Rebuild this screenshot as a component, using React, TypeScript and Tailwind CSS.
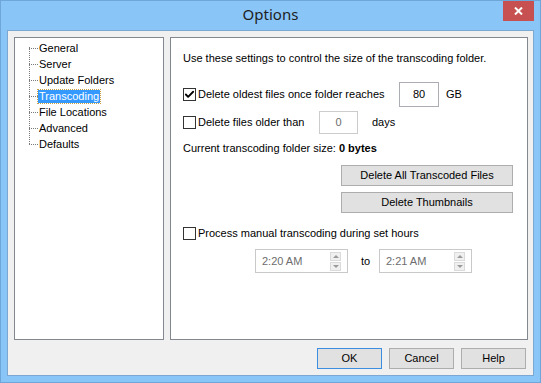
import { Check } from 'lucide-react'

const font = { fontFamily: '"Liberation Sans", Arial, sans-serif' }

const treeItems = ['General', 'Server', 'Update Folders', 'Transcoding', 'File Locations', 'Advanced', 'Defaults']

function CheckBox({ checked }: { checked?: boolean }) {
  return (
    <div className="w-[13px] h-[13px] border border-[#333333] bg-white flex items-center justify-center shrink-0">
      {checked && <Check className="w-[11px] h-[11px] text-black" strokeWidth={4} />}
    </div>
  )
}

function Spinner({ value }: { value: string }) {
  return (
    <div className="w-[93px] h-[24px] border border-[#c9c9c9] bg-white flex items-center justify-between pl-[6px] pr-[6px]">
      <span className="text-[#6d6d6d]">{value}</span>
      <div className="flex flex-col gap-[1px]">
        <div className="w-[11px] h-[9px] bg-[#f0f0f0] border border-[#dadada] flex items-center justify-center">
          <div className="w-0 h-0 border-l-[3px] border-r-[3px] border-b-[3px] border-l-transparent border-r-transparent border-b-[#9a9a9a]" />
        </div>
        <div className="w-[11px] h-[9px] bg-[#f0f0f0] border border-[#dadada] flex items-center justify-center">
          <div className="w-0 h-0 border-l-[3px] border-r-[3px] border-t-[3px] border-l-transparent border-r-transparent border-t-[#9a9a9a]" />
        </div>
      </div>
    </div>
  )
}

function Button({ label, width, focused }: { label: string; width: string; focused?: boolean }) {
  return (
    <div
      className={`${width} h-[21px] flex items-center justify-center bg-[#e1e1e1] border ${
        focused ? 'border-[#3c8ee0]' : 'border-[#adadad]'
      } text-black`}
    >
      {label}
    </div>
  )
}

export default function App() {
  return (
    <div
      className="w-[541px] h-[383px] bg-[#8ac5f8] border border-[#6fa6da] flex flex-col text-[11px] text-black whitespace-nowrap"
      style={font}
    >
      {/* title bar */}
      <div className="h-[29px] relative flex items-center justify-center">
        <span className="text-[15px] text-[#1e1e1e] -mt-[2px]" style={{ fontFamily: '"Noto Sans", sans-serif' }}>
          Options
        </span>
        <div className="absolute top-0 right-[6px] w-[31px] h-[20px] bg-[#c75050] flex items-center justify-center">
          <svg width="9" height="8" viewBox="0 0 9 8">
            <path d="M1 0.5 L8 7.5 M8 0.5 L1 7.5" stroke="white" strokeWidth="2" />
          </svg>
        </div>
      </div>

      {/* client area */}
      <div className="ml-[6px] w-[527px] h-[346px] border border-[#7ba7d3] bg-[#f0f0f0] flex flex-col pt-[6px] pl-[6px]">
        <div className="flex gap-[6px] h-[303px]">
          {/* tree */}
          <div className="w-[150px] h-full border border-[#828790] bg-white pt-[2px] relative">
            <div className="absolute left-[14px] top-[9px] h-[97px] border-l border-dotted border-[#7a7a7a]" />
            {treeItems.map((item) => (
              <div key={item} className="h-[16px] flex items-center">
                <div className="ml-[14px] w-[9px] border-t border-dotted border-[#7a7a7a]" />
                {item === 'Transcoding' ? (
                  <span className="px-[1px] leading-[13px] bg-[#3399ff] text-white outline outline-1 outline-dotted outline-[#c8a040]">
                    {item}
                  </span>
                ) : (
                  <span className="ml-[1px]">{item}</span>
                )}
              </div>
            ))}
          </div>

          {/* settings */}
          <div className="w-[358px] h-full border border-[#828790] bg-white pl-[12px] pt-[12px]">
            <div className="h-[16px] flex items-center">Use these settings to control the size of the transcoding folder.</div>

            <div className="mt-[16px] h-[24px] flex items-center">
              <CheckBox checked />
              <span className="ml-[2px] w-[201px]">Delete oldest files once folder reaches</span>
              <div className="w-[40px] h-[25px] border border-[#abadb3] flex items-center justify-center">80</div>
              <span className="ml-[7px]">GB</span>
            </div>

            <div className="mt-[5px] h-[23px] flex items-center">
              <CheckBox />
              <span className="ml-[2px] w-[121px]">Delete files older than</span>
              <div className="w-[39px] h-[23px] border border-[#cccccc] flex items-center justify-center text-[#6d6d6d]">0</div>
              <span className="ml-[14px]">days</span>
            </div>

            <div className="mt-[6px] h-[16px] flex items-center">
              Current transcoding folder size:&nbsp;<span className="font-bold">0 bytes</span>
            </div>

            <div className="mt-[9px] ml-[158px] flex flex-col gap-[6px]">
              <Button label="Delete All Transcoded Files" width="w-[172px]" />
              <Button label="Delete Thumbnails" width="w-[172px]" />
            </div>

            <div className="mt-[13px] h-[14px] flex items-center">
              <CheckBox />
              <span className="ml-[2px]">Process manual transcoding during set hours</span>
            </div>

            <div className="mt-[9px] ml-[72px] flex items-center">
              <Spinner value="2:20 AM" />
              <span className="ml-[13px] w-[18px]">to</span>
              <Spinner value="2:21 AM" />
            </div>
          </div>
        </div>

        {/* bottom buttons */}
        <div className="mt-[8px] ml-[303px] flex gap-[7px]">
          <Button label="OK" width="w-[65px]" focused />
          <Button label="Cancel" width="w-[65px]" />
          <Button label="Help" width="w-[65px]" />
        </div>
      </div>
    </div>
  )
}
